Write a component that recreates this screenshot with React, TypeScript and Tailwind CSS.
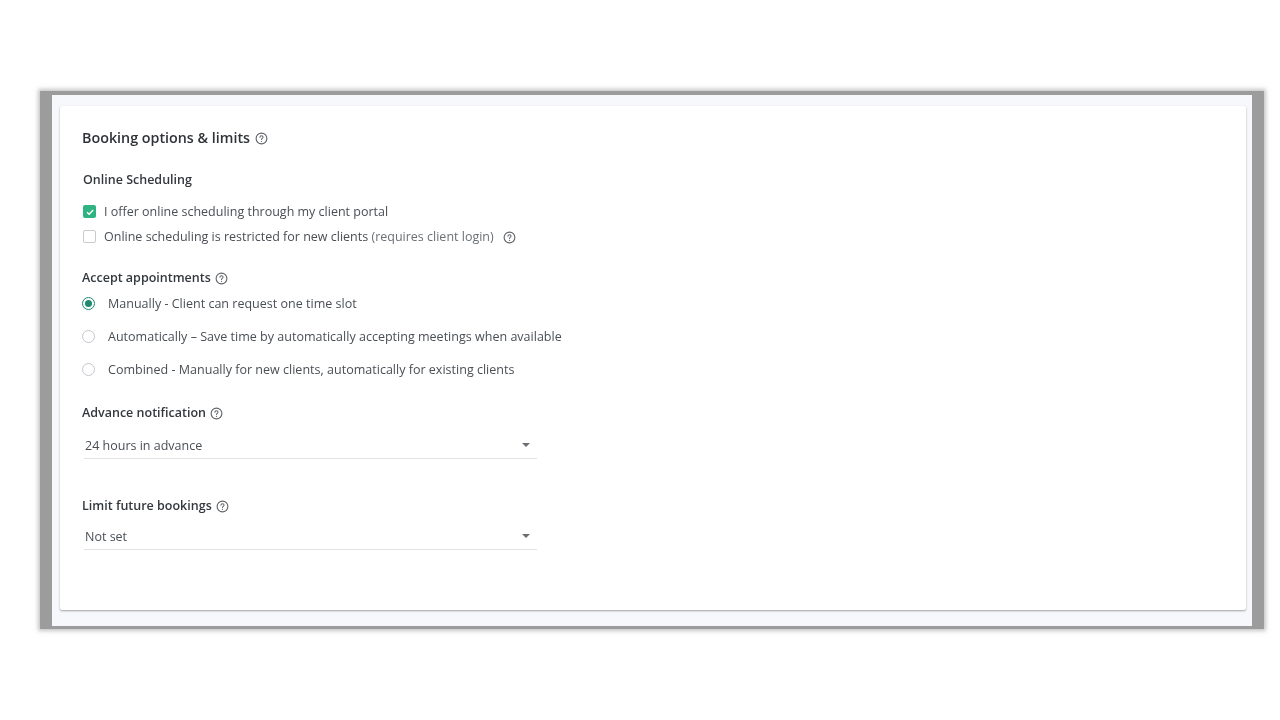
const HelpIcon = ({ className = "" }: { className?: string }) => (
  <svg viewBox="0 0 14 14" className={`h-[13px] w-[13px] shrink-0 ${className}`} fill="none">
    <circle cx="7" cy="7" r="5.8" stroke="#5f6368" strokeWidth="1.2" />
    <path d="M5.3 5.6c0-1 .8-1.6 1.7-1.6s1.7.6 1.7 1.5c0 1.3-1.7 1.3-1.7 2.6" stroke="#5f6368" strokeWidth="1.1" strokeLinecap="round" />
    <circle cx="7" cy="10" r=".7" fill="#5f6368" />
  </svg>
);

const Radio = ({ checked = false }: { checked?: boolean }) => (
  <span className={`mb-[2px] flex h-[13px] w-[13px] shrink-0 items-center justify-center rounded-full border ${checked ? "border-[#1f8a70]" : "border-[#c4c7cc]"}`}>
    {checked && <span className="h-[7px] w-[7px] rounded-full bg-[#1f8a70]" />}
  </span>
);

const RadioRow = ({ label, checked }: { label: string; checked?: boolean }) => (
  <div className="flex h-[33px] items-center gap-[13px]">
    <Radio checked={checked} />
    <span className="text-[12.54px] text-[#4a4f55]">{label}</span>
  </div>
);

const Select = ({ value }: { value: string }) => (
  <div className="ml-[2px] flex h-[26px] w-[453px] items-center justify-between border-b border-[#e0e2e4] pl-[1px] pr-[7px]">
    <span className="mt-[2px] text-[12.5px] text-[#4a4f55]">{value}</span>
    <span className="mb-[1px] h-0 w-0 border-x-[4px] border-t-[4px] border-x-transparent border-t-[#6b6f74]" />
  </div>
);

const Label = ({ children }: { children: string }) => (
  <div className="flex h-[20px] items-center gap-[4px]">
    <span className="text-[12.5px] font-semibold text-[#33383d]">{children}</span>
    <HelpIcon />
  </div>
);

export default function App() {
  return (
    <div className="h-[720px] w-[1280px] bg-white pl-[40px] pt-[91px] font-['Open_Sans',sans-serif]">
      <div className="h-[538px] w-[1224px] border-x-[12px] border-b-[3px] border-t-[4px] border-[#9c9c9c] bg-[#f7f8fb] px-[8px] pt-[11px] shadow-[0_0_4px_2px_rgba(150,150,150,0.55)] blur-[0.3px]">
        <div className="h-[504px] w-[1186px] rounded-[2px] bg-white pl-[22px] pt-[21px] shadow-[0_1px_2px_rgba(80,80,80,0.5)]">
          <div className="flex h-[22px] items-center gap-[5px]">
            <span className="text-[14.3px] font-semibold text-[#2f3338]">Booking options &amp; limits</span>
            <HelpIcon />
          </div>

          <div className="mt-[21px] flex h-[20px] items-center pl-[1px]">
            <span className="text-[12.5px] font-semibold text-[#33383d]">Online Scheduling</span>
          </div>

          <div className="mt-[12px] flex h-[20px] items-center gap-[8px] pl-[1px]">
            <span className="mb-[1px] flex h-[13px] w-[13px] items-center justify-center rounded-[2px] bg-[#2fb383]">
              <svg viewBox="0 0 12 12" className="h-[12px] w-[12px]" fill="none">
                <path d="M3 6.2l2.1 2.1L9.2 4" stroke="white" strokeWidth="1.3" />
              </svg>
            </span>
            <span className="text-[12.5px] text-[#4a4f55]">I offer online scheduling through my client portal</span>
          </div>
          <div className="mt-[5px] flex h-[20px] items-center gap-[8px] pl-[1px]">
            <span className="mb-[1px] h-[13px] w-[13px] rounded-[2px] border border-[#c9cbce]" />
            <span className="text-[12.5px] text-[#4a4f55]">
              Online scheduling is restricted for new clients <span className="text-[#6b7075]">(requires client login)</span>
            </span>
            <HelpIcon className="ml-[1px]" />
          </div>

          <div className="mt-[21px]">
            <Label>Accept appointments</Label>
          </div>
          <div>
            <RadioRow checked label="Manually - Client can request one time slot" />
            <RadioRow label="Automatically – Save time by automatically accepting meetings when available" />
            <RadioRow label="Combined - Manually for new clients, automatically for existing clients" />
          </div>

          <div className="mt-[16px]">
            <Label>Advance notification</Label>
          </div>
          <div className="mt-[10px]">
            <Select value="24 hours in advance" />
          </div>

          <div className="mt-[37px]">
            <Label>Limit future bookings</Label>
          </div>
          <div className="mt-[8px]">
            <Select value="Not set" />
          </div>
        </div>
      </div>
    </div>
  );
}
